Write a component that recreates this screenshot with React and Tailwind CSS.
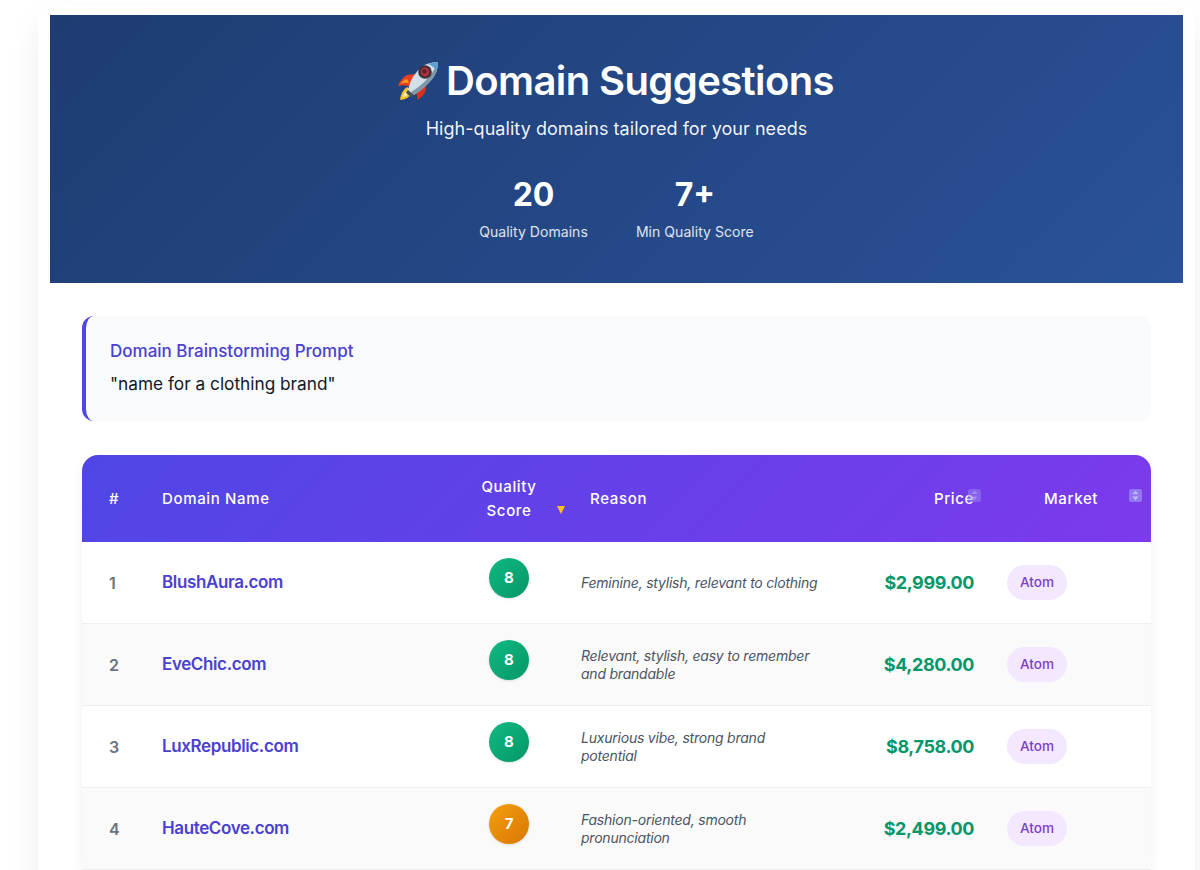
import React from 'react';

const rows = [
  { id: 1, name: 'BlushAura.com', score: 8, reason: 'Feminine, stylish, relevant to clothing', price: '$2,999.00' },
  { id: 2, name: 'EveChic.com', score: 8, reason: 'Relevant, stylish, easy to remember and brandable', price: '$4,280.00' },
  { id: 3, name: 'LuxRepublic.com', score: 8, reason: 'Luxurious vibe, strong brand potential', price: '$8,758.00' },
  { id: 4, name: 'HauteCove.com', score: 7, reason: 'Fashion-oriented, smooth pronunciation', price: '$2,499.00' },
];

const cols = 'grid grid-cols-[63px_306px_130px_272px_121px_177px]';

function Rocket() {
  return (
    <svg width="42" height="40" viewBox="0 0 42 40" className="shrink-0">
      {/* fins */}
      <path d="M1 25 Q4 17 10 14 L18 13 L14 26 Q8 23 1 25 Z" fill="#e8401f" />
      <path d="M3 23 Q6 19 10 18 L12 22 Q7 21 3 23 Z" fill="#f9a01b" />
      <path d="M28 21 L29 29 Q27 35 20 39 Q21 32 16 28 Z" fill="#d8301e" />
      {/* flame */}
      <path d="M10 26 Q4 30 3 39 Q12 38 16 31 Z" fill="#f9c22e" />
      <path d="M8 31 Q6 34 6 36 Q10 35 12 32 Z" fill="#fff2a8" />
      {/* body */}
      <path d="M11 29 Q14 14 26 5 Q33 1 41 1 Q41 10 36 17 Q28 27 17 34 Z" fill="#d3e0ea" />
      <path d="M17 34 Q28 27 36 17 Q41 10 41 1 Q38 9 31 17 Q23 26 14 31 Z" fill="#7f97aa" />
      <path d="M31 3 Q36 1 41 1 Q41 6 39 10 Q37 5 31 3 Z" fill="#5f9fd0" />
      <path d="M11 29 L17 34 L14 36 L9 32 Z" fill="#4b4f58" />
      {/* window */}
      <circle cx="28" cy="11" r="6.8" fill="#3f3236" />
      <circle cx="28" cy="11" r="4.4" fill="#b3303a" />
      <circle cx="27.4" cy="10.4" r="2.1" fill="#54202a" />
    </svg>
  );
}

function SortIcon({ faint }) {
  return (
    <svg width="13" height="13" viewBox="0 0 13 13" className={faint ? 'opacity-50' : 'opacity-80'}>
      <rect width="13" height="13" rx="2.5" fill="#9a88f2" />
      <path d="M6.5 1.5 L9.5 5 H3.5 Z M6.5 11.5 L9.5 7.5 H3.5 Z" fill="#d9d3fb" />
    </svg>
  );
}

function ScoreBadge({ score }) {
  const color = score >= 8
    ? 'bg-[linear-gradient(135deg,#10b981,#059669)]'
    : 'bg-[linear-gradient(135deg,#f59e0b,#d97706)]';
  return (
    <div className={`w-10 h-10 rounded-full flex items-center justify-center text-white font-bold text-[15px] shadow-sm ${color}`}>
      {score}
    </div>
  );
}

function Row({ row }) {
  const striped = row.id % 2 === 0;
  return (
    <div className={`${cols} h-[82px] items-center border-b border-[#eeeeee] ${striped ? 'bg-[#fafafa]' : 'bg-white'}`}>
      <div className="pl-[27px] text-base font-semibold text-[#6b7280]">{row.id}</div>
      <div className="pl-[17px] pt-[1px] text-[17px] tracking-[-0.38px] font-semibold text-[#4a41cf]">{row.name}</div>
      <div className="flex justify-center pr-[14px] mb-[9px]">
        <ScoreBadge score={row.score} />
      </div>
      <div className="pr-[34px] text-sm leading-[18px] tracking-[-0.22px] italic text-[#4b5563]">{row.reason}</div>
      <div className="text-right text-lg tracking-[-0.4px] font-bold text-[#059669]">{row.price}</div>
      <div className="pl-[33px]">
        <span className="inline-flex items-center justify-center w-[60px] h-[35px] rounded-full bg-[#f3e8ff] text-[13.6px] font-medium text-[#7e3fc4]">Atom</span>
      </div>
    </div>
  );
}

export default function App() {
  return (
    <div className="h-[870px] overflow-hidden bg-white font-['Inter',sans-serif] pl-[38px] pr-[5px] pt-[5px]">
      <div className="bg-white rounded-[16px] shadow-[0_16px_32px_rgba(0,0,0,0.07)] px-[12px] pt-[10px] h-[900px]">
        <div className="w-[1133px] h-[268px] bg-[linear-gradient(135deg,#1e3c72,#2a5298)] text-white pt-[40px] flex flex-col items-center">
          <h1 className="flex items-center gap-[7px] pr-[2px] text-[40px] leading-[52px] tracking-[-0.6px] font-semibold">
            <Rocket />
            <span>Domain Suggestions</span>
          </h1>
          <p className="mt-[8px] text-lg leading-[28px] tracking-[0.05px] text-white/95">High-quality domains tailored for your needs</p>
          <div className="mt-[28px] flex gap-[48px]">
            <div className="flex flex-col items-center">
              <div className="text-[32px] leading-[48px] font-bold">20</div>
              <div className="mt-[1px] text-sm leading-[24px] tracking-[0.05px] text-white/85">Quality Domains</div>
            </div>
            <div className="flex flex-col items-center">
              <div className="text-[32px] leading-[48px] font-bold">7+</div>
              <div className="mt-[1px] text-sm leading-[24px] tracking-[0.05px] text-white/85">Min Quality Score</div>
            </div>
          </div>
        </div>

        <div className="px-[32px] pt-[33px]">
          <div className="h-[105px] rounded-[12px] border-l-4 border-[#4f46e5] bg-[#f8fafc] pl-[24px] pt-[22px]">
            <div className="text-[17px] leading-[26px] font-medium text-[#4a41cf]">Domain Brainstorming Prompt</div>
            <div className="mt-[7px] text-[17.25px] leading-[26px] text-[#111827]">"name for a clothing brand"</div>
          </div>

          <div className="mt-[34px] rounded-t-[16px] overflow-hidden shadow-[0_4px_12px_rgba(0,0,0,0.06)]">
            <div className={`${cols} h-[87px] items-center bg-[linear-gradient(135deg,#4f46e5,#7c3aed)] text-[15px] font-medium tracking-[0.65px] text-white`}>
              <div className="pl-[27px] pt-[1px]">#</div>
              <div className="pl-[17px] pt-[1px]">Domain Name</div>
              <div className="relative text-center leading-[24px] pr-[14px]">
                Quality<br />Score
                <span className="absolute left-[106px] top-[31px] w-0 h-0 border-x-[4.5px] border-t-[8px] border-x-transparent border-t-[#fbbf24]" />
              </div>
              <div className="pl-[9px] pt-[1px]">Reason</div>
              <div className="relative text-right pt-[1px]">
                Price
                <span className="absolute right-[-7px] top-[2px]"><SortIcon faint /></span>
              </div>
              <div className="relative pl-[70px] pt-[1px]">
                Market
                <span className="absolute left-[155px] top-[2px]"><SortIcon /></span>
              </div>
            </div>
            {rows.map((row) => <Row key={row.id} row={row} />)}
          </div>
        </div>
      </div>
    </div>
  );
}
